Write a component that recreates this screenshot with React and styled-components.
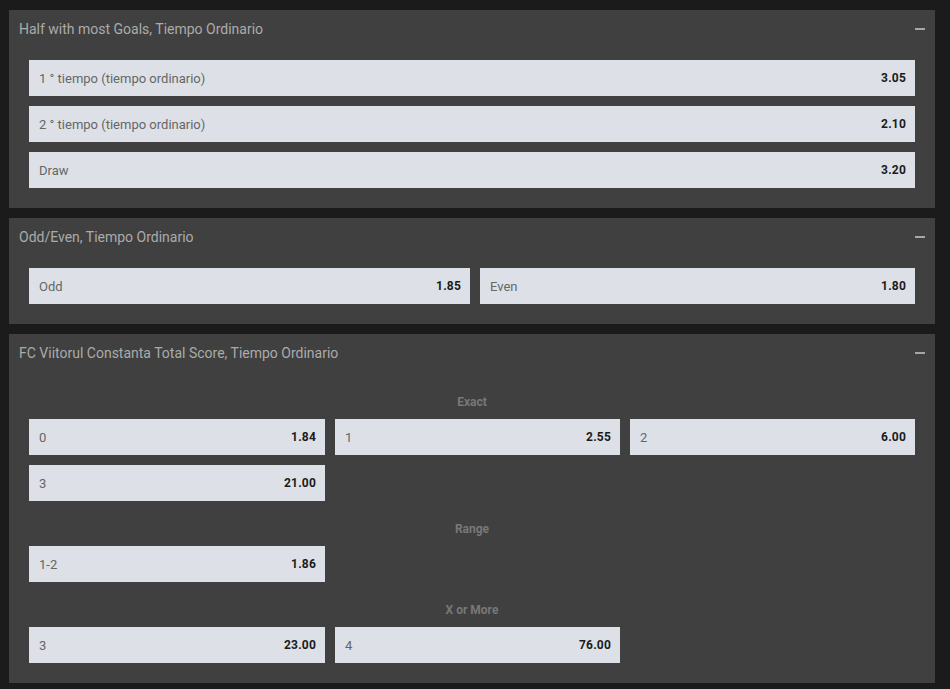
import React from 'react'
import styled, { createGlobalStyle } from 'styled-components'

const GlobalStyle = createGlobalStyle`
	html, body {
		margin: 0;
		padding: 0;
		background: #1b1b1b;
		font-family: Roboto, "Liberation Sans", sans-serif;
	}
`

const markets = [
	{
		title: 'Half with most Goals, Tiempo Ordinario',
		groups: [
			{ cols: '1fr', rows: [
				[{ name: '1 ° tiempo (tiempo ordinario)', odd: '3.05' }],
				[{ name: '2 ° tiempo (tiempo ordinario)', odd: '2.10' }],
				[{ name: 'Draw', odd: '3.20' }],
			] },
		],
	},
	{
		title: 'Odd/Even, Tiempo Ordinario',
		groups: [
			{ cols: '441fr 435fr', rows: [
				[{ name: 'Odd', odd: '1.85' }, { name: 'Even', odd: '1.80' }],
			] },
		],
	},
	{
		title: 'FC Viitorul Constanta Total Score, Tiempo Ordinario',
		groups: [
			{ label: 'Exact', cols: '296fr 285fr 285fr', rows: [
				[{ name: '0', odd: '1.84' }, { name: '1', odd: '2.55' }, { name: '2', odd: '6.00' }],
				[{ name: '3', odd: '21.00' }],
			] },
			{ label: 'Range', cols: '296fr 285fr 285fr', rows: [
				[{ name: '1-2', odd: '1.86' }],
			] },
			{ label: 'X or More', cols: '296fr 285fr 285fr', rows: [
				[{ name: '3', odd: '23.00' }, { name: '4', odd: '76.00' }],
			] },
		],
	},
]

export default function App() {
	return (
		<Page>
			<GlobalStyle />
			{markets.map((m, i) => (
				<Panel key={i}>
					<Header>
						<Title>{m.title}</Title>
						<Collapse />
					</Header>
					<Body>
						{m.groups.map((g, j) => (
							<Group key={j}>
								{g.label && <GroupLabel>{g.label}</GroupLabel>}
								{g.rows.map((row, k) => (
									<Row key={k} cols={g.cols}>
										{row.map((o, n) => (
											<OddBtn key={n}>
												<Name>{o.name}</Name>
												<Price>{o.odd}</Price>
											</OddBtn>
										))}
									</Row>
								))}
							</Group>
						))}
					</Body>
				</Panel>
			))}
		</Page>
	)
}

const Page = styled.div`
	display: flex;
	flex-direction: column;
	gap: 10px;
	padding: 10px 15px 7px 9px;
`

const Panel = styled.section`
	background: #404040;
`

const Header = styled.div`
	height: 40px;
	display: flex;
	align-items: center;
	justify-content: space-between;
	padding: 0 10px 2px;
	box-sizing: border-box;
`

const Title = styled.span`
	color: #ababab;
	font-size: 14px;
`

const Collapse = styled.span`
	width: 10px;
	height: 2px;
	background: #a6a6a6;
`

const Body = styled.div`
	padding: 10px 20px 20px;
	display: flex;
	flex-direction: column;
	gap: 10px;
`

const Group = styled.div`
	display: flex;
	flex-direction: column;
	gap: 10px;
`

const GroupLabel = styled.div`
	color: #787878;
	font-size: 12px;
	font-weight: 700;
	text-align: center;
	line-height: 18px;
	margin: 9px 0 -2px;
`

const Row = styled.div`
	display: grid;
	grid-template-columns: ${p => p.cols};
	gap: 10px;
`

const OddBtn = styled.div`
	height: 36px;
	background: #dde1e7;
	display: flex;
	align-items: center;
	justify-content: space-between;
	padding: 0 9px 0 10px;
	cursor: pointer;
`

const Name = styled.span`
	color: #666;
	font-size: 13px;
`

const Price = styled.span`
	color: #1b1b1b;
	font-size: 12px;
	font-weight: 700;
	letter-spacing: 0.2px;
`
